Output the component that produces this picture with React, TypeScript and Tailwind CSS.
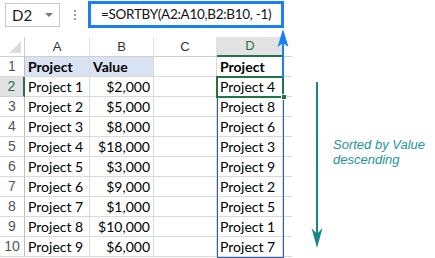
import React from 'react'

const rows = [
  { n: 1, a: 'Project', b: 'Value', d: 'Project', head: true },
  { n: 2, a: 'Project 1', b: '$2,000', d: 'Project 4' },
  { n: 3, a: 'Project 2', b: '$5,000', d: 'Project 8' },
  { n: 4, a: 'Project 3', b: '$8,000', d: 'Project 6' },
  { n: 5, a: 'Project 4', b: '$18,000', d: 'Project 3' },
  { n: 6, a: 'Project 5', b: '$3,000', d: 'Project 9' },
  { n: 7, a: 'Project 6', b: '$9,000', d: 'Project 2' },
  { n: 8, a: 'Project 7', b: '$1,000', d: 'Project 5' },
  { n: 9, a: 'Project 8', b: '$10,000', d: 'Project 1' },
  { n: 10, a: 'Project 9', b: '$6,000', d: 'Project 7' },
]

const cellFont = { fontFamily: 'Lato, "Liberation Sans", sans-serif' }
const uiFont = { fontFamily: '"Liberation Sans", Arial, sans-serif' }

function TopBar() {
  return (
    <div className="flex h-[30px] items-start" style={uiFont}>
      <div className="ml-[5px] mt-[3px] flex h-[24px] w-[55px] items-center justify-between border border-[#c8c8c8] pl-[6px] pr-[6px]">
        <span className="text-[15px] text-[#222]" style={cellFont}>D2</span>
        <span className="h-0 w-0 border-x-[4px] border-t-[4px] border-x-transparent border-t-[#7a7a7a]" />
      </div>
      <div className="ml-[14px] mt-[10px] flex flex-col gap-[2px]">
        <span className="h-[2px] w-[2px] bg-[#9a9a9a]" />
        <span className="h-[2px] w-[2px] bg-[#9a9a9a]" />
        <span className="h-[2px] w-[2px] bg-[#9a9a9a]" />
      </div>
      <div
        className="ml-[12px] mt-[1px] flex h-[27px] w-[196px] items-center overflow-hidden whitespace-nowrap border-[3px] border-[#1a7ff0] pl-[10px] text-[13.5px] tracking-[-0.3px] text-[#111]"
        style={cellFont}
      >
        =SORTBY(A2:A10,B2:B10, -1)
      </div>
    </div>
  )
}

function Sheet() {
  const cols = ['A', 'B', 'C', 'D']
  return (
    <div className="relative mt-[7px] grid w-[292px] grid-cols-[25px_65px_64px_63px_66px_9px] auto-rows-[20px]">
      {/* column header row */}
      <div className="relative border-b border-r border-[#d0d0d0] bg-white">
        <span className="absolute bottom-[3px] right-[3px] h-0 w-0 border-b-[12px] border-l-[12px] border-b-[#dcdcdc] border-l-transparent" />
      </div>
      {cols.map((c) => (
        <div
          key={c}
          className={
            c === 'D'
              ? 'flex items-center justify-center border-b-2 border-[#217346] bg-[#e3e3e3] text-[13px] text-[#217346]'
              : 'flex items-center justify-center border-b border-r border-b-[#d0d0d0] border-r-[#e2e2e2] bg-white text-[13px] text-[#333]'
          }
          style={uiFont}
        >
          {c}
        </div>
      ))}
      <div className="border-b border-[#d0d0d0]" />

      {rows.map((r) => (
        <React.Fragment key={r.n}>
          <div
            className={
              r.n === 2
                ? 'flex items-center justify-center border-b border-r-2 border-b-[#d0d0d0] border-r-[#217346] bg-[#e1e1e1] text-[14px] text-[#217346]'
                : 'flex items-center justify-center border-b border-r border-b-[#dadada] border-r-[#bfbfbf] text-[14px] text-[#555]'
            }
            style={uiFont}
          >
            {r.n}
          </div>
          <div
            className={`flex items-center border-b border-r border-[#d9d9d9] pl-[3px] text-[14px] text-black ${r.head ? 'bg-[#dae3f3] font-bold' : ''}`}
            style={cellFont}
          >
            {r.a}
          </div>
          <div
            className={`flex items-center border-b border-r border-[#d9d9d9] text-[14px] text-black ${r.head ? 'bg-[#dae3f3] pl-[3px] font-bold' : 'justify-end pr-[3px]'}`}
            style={cellFont}
          >
            {r.b}
          </div>
          <div className="border-b border-r border-[#d9d9d9]" />
          <div
            className={`flex items-center border-b border-r border-[#d9d9d9] pl-[3px] text-[14px] text-black ${r.head ? 'font-bold' : ''}`}
            style={cellFont}
          >
            {r.d}
          </div>
          <div className="border-b border-[#d9d9d9]" />
        </React.Fragment>
      ))}

      {/* spill range D2:D10 */}
      <div className="pointer-events-none absolute left-[217px] top-[40px] h-[181px] w-[67px] border border-[#2f5ea8]" />
      {/* active cell D2 */}
      <div className="pointer-events-none absolute left-[216px] top-[39px] h-[22px] w-[68px] border-2 border-[#217346]" />
      <div className="pointer-events-none absolute left-[281px] top-[57px] h-[6px] w-[6px] border border-white bg-[#217346]" />
    </div>
  )
}

export default function App() {
  return (
    <div className="relative h-[258px] w-[435px] overflow-hidden bg-white">
      <TopBar />
      <Sheet />

      <svg className="pointer-events-none absolute left-0 top-0" width="435" height="258">
        <line x1="283" y1="78" x2="283" y2="40" stroke="#1a7ff0" strokeWidth="2" />
        <path d="M283 29 L277.5 47 L283 43 L288.5 47 Z" fill="#1a7ff0" />
        <line x1="317" y1="82" x2="317" y2="238" stroke="#17878a" strokeWidth="2" />
        <path d="M317 248 L311.5 228 L317 234 L322.5 228 Z" fill="#17878a" />
      </svg>

      <div
        className="absolute left-[333px] top-[137px] text-[13px] italic leading-[15px] text-[#1f9593]"
        style={uiFont}
      >
        Sorted by Value
        <br />
        descending
      </div>
    </div>
  )
}
